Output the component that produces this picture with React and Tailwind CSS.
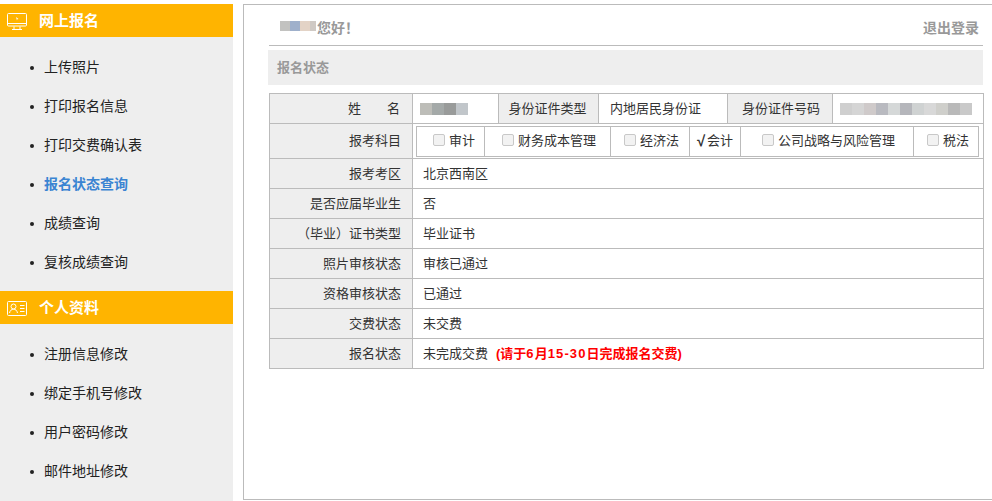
import React from 'react';

const signupLinks = [
  { label: '上传照片' },
  { label: '打印报名信息' },
  { label: '打印交费确认表' },
  { label: '报名状态查询', active: true },
  { label: '成绩查询' },
  { label: '复核成绩查询' },
];

const profileLinks = [
  { label: '注册信息修改' },
  { label: '绑定手机号修改' },
  { label: '用户密码修改' },
  { label: '邮件地址修改' },
];

const subjects = [
  { label: '审计', width: 'w-[68px]', pad: 'pl-[16px]' },
  { label: '财务成本管理', width: 'w-[126px]', pad: 'pl-[17px]' },
  { label: '经济法', width: 'w-[79px]', pad: 'pl-[13px]' },
  { label: '会计', width: 'w-[51px]', pad: 'pl-[7px]', checked: true },
  { label: '公司战略与风险管理', width: 'w-[173px]', pad: 'pl-[21px]' },
  { label: '税法', width: 'w-[65px]', pad: 'pl-[13px]' },
];

const rows = [
  { label: '报考考区', value: '北京西南区' },
  { label: '是否应届毕业生', value: '否' },
  { label: '（毕业）证书类型', value: '毕业证书' },
  { label: '照片审核状态', value: '审核已通过' },
  { label: '资格审核状态', value: '已通过' },
  { label: '交费状态', value: '未交费' },
];

const MonitorIcon = () => (
  <svg width="20" height="18" viewBox="0 0 20 18" fill="none" stroke="white" strokeWidth="1" className="mt-[1px]">
    <rect x="0.5" y="0.5" width="19" height="12.5" rx="1" />
    <path d="M0.5 10.5h19" />
    <path d="M7 13.5v2.5M13 13.5v2.5M5 16.5h10" />
    <path d="M9 4l2.5 2-1.2.2-.3 1.3z" fill="white" stroke="none" />
  </svg>
);

const ProfileIcon = () => (
  <svg width="20" height="15" viewBox="0 0 20 15" fill="none" stroke="white" strokeWidth="1">
    <rect x="0.5" y="0.5" width="19" height="14" rx="1" />
    <circle cx="6.5" cy="5.5" r="2.5" />
    <path d="M2.5 12c.5-2.500 2-3.800 4-3.800s3.500 1.300 4 3.800" />
    <path d="M13 4.500h4.500M13 7.500h4.500M13 10.500h4.500" />
  </svg>
);

const SideSection = ({ icon, title, links }) => (
  <div>
    <div className="h-[33px] pt-[2px] bg-[#ffb400] flex items-center text-white">
      <div className="w-[20px] ml-[7px] flex items-center justify-center">{icon}</div>
      <span className="ml-[12px] text-[15px] font-bold">{title}</span>
    </div>
    <ul className="pt-[11px] pb-[9px]">
      {links.map((link) => (
        <li key={link.label} className="h-[39px] flex items-center pl-[30px]">
          <span className="w-[4px] h-[4px] rounded-full bg-[#222]"></span>
          <span className={`ml-[10px] text-[14px] ${link.active ? 'text-[#3a84d2] font-bold' : 'text-[#222]'}`}>
            {link.label}
          </span>
        </li>
      ))}
    </ul>
  </div>
);

const Mosaic = ({ colors, size = 'w-[12px] h-[12px]' }) => (
  <div className="flex">
    {colors.map((color, i) => (
      <div key={i} className={size} style={{ backgroundColor: color }}></div>
    ))}
  </div>
);

const labelCell = 'border border-[#bbb] bg-[#eee] text-[#333]';
const valueCell = 'border border-[#bbb] text-[#333]';

export default function App() {
  return (
    <div className="w-[992px] h-[501px] overflow-hidden bg-white flex items-stretch pt-[4px] font-['Liberation_Sans','Noto_Sans_CJK_SC',sans-serif]">
      <aside className="w-[233px] shrink-0 bg-[#eee]">
        <SideSection icon={<MonitorIcon />} title="网上报名" links={signupLinks} />
        <SideSection icon={<ProfileIcon />} title="个人资料" links={profileLinks} />
      </aside>

      <main className="ml-[10px] w-[749px] h-[496px] border border-[#bbb] border-r-0">
        <div className="ml-[25px] mr-[9px] h-[41px] border-b border-[#bbb] flex items-center justify-between pt-[6px] text-[14px] font-bold text-[#999]">
          <div className="flex items-center pl-[11px]">
            <div className="mt-[-4px]">
              <Mosaic colors={['#c2c2c0', '#9fb0cb', '#e3d3c6']} size="w-[10px] h-[10px]" />
            </div>
            <div className="mt-[-4px] w-[6px] h-[10px] bg-[#cfc9c4]"></div>
            <span className="ml-[1px]">您好！</span>
          </div>
          <span className="mr-[4px]">退出登录</span>
        </div>

        <div className="ml-[24px] mr-[9px] mt-[4px] h-[35px] bg-[#eee] flex items-center pl-[9px] text-[13px] font-bold text-[#999]">
          报名状态
        </div>

        <table className="ml-[25px] mt-[8px] w-[714px] table-fixed border-collapse text-[13px]">
          <colgroup>
            <col className="w-[143px]" />
            <col className="w-[86px]" />
            <col className="w-[100px]" />
            <col className="w-[129px]" />
            <col className="w-[105px]" />
            <col className="w-[151px]" />
          </colgroup>
          <tbody>
            <tr className="h-[30px]">
              <td className={`${labelCell} text-right pr-[12px]`}>姓&emsp;&emsp;名</td>
              <td className={valueCell}>
                <div className="pl-[7px]">
                  <Mosaic colors={['#bdbdb8', '#a4a9a8', '#999b9a', '#c1c6ca']} />
                </div>
              </td>
              <td className={`${labelCell} text-center pr-[2px]`}>身份证件类型</td>
              <td className={`${valueCell} pl-[11px]`}>内地居民身份证</td>
              <td className={`${labelCell} text-center pl-[2px]`}>身份证件号码</td>
              <td className={valueCell}>
                <div className="pl-[7px]">
                  <Mosaic colors={['#cfcfcf', '#d5d5d5', '#cfcaca', '#b9bac0', '#d5d8d8', '#b5b6bb', '#cfd2d2', '#d8d8d8', '#cfcfcb', '#b9b9b9', '#c9c9c9']} />
                </div>
              </td>
            </tr>
            <tr className="h-[35px]">
              <td className={`${labelCell} text-right pr-[11px]`}>报考科目</td>
              <td colSpan={5} className={`${valueCell} pl-[3px] pr-[4px]`}>
                <div className="flex h-[31px] border border-[#bbb]">
                  {subjects.map((subject) => (
                    <div
                      key={subject.label}
                      className={`${subject.width} ${subject.pad} shrink-0 flex items-center border-r border-[#bbb] last:border-r-0`}
                    >
                      {subject.checked ? (
                        <span className="font-bold text-[15px] w-[10px]">√</span>
                      ) : (
                        <input
                          type="checkbox"
                          disabled
                          className="appearance-none w-[12px] h-[12px] mr-[4px] mb-[3px] border border-[#c8c8c8] bg-[#f2f2f2] rounded-[2px]"
                        />
                      )}
                      <span>{subject.label}</span>
                    </div>
                  ))}
                </div>
              </td>
            </tr>
            {rows.map((row) => (
              <tr key={row.label} className="h-[30px]">
                <td className={`${labelCell} text-right pr-[11px]`}>{row.label}</td>
                <td colSpan={5} className={`${valueCell} pl-[10px]`}>{row.value}</td>
              </tr>
            ))}
            <tr className="h-[30px]">
              <td className={`${labelCell} text-right pr-[11px]`}>报名状态</td>
              <td colSpan={5} className={`${valueCell} pl-[10px]`}>
                未完成交费
                <span className="ml-[8px] font-bold text-[#f00]">
                  (请于<span className="tracking-[1.1px]">6</span>月<span className="tracking-[1.1px]">15-30</span>日完成报名交费)
                </span>
              </td>
            </tr>
          </tbody>
        </table>
      </main>
    </div>
  );
}
